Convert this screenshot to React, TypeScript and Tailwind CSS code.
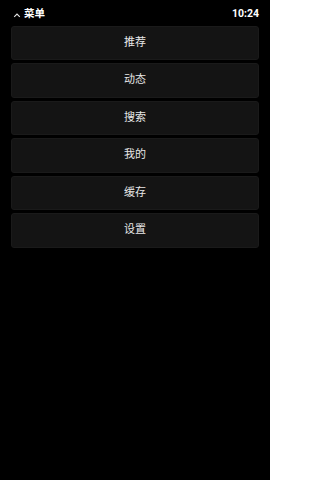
const items = ["推荐", "动态", "搜索", "我的", "缓存", "设置"];

export default function App() {
  return (
    <div
      className="w-[270px] h-[480px] bg-black text-white overflow-hidden"
      style={{ fontFamily: 'Roboto, "Noto Sans CJK SC", sans-serif' }}
    >
      <div className="flex items-center justify-between h-[24px] pl-[13px] pr-[11px] pt-[5px]">
        <div className="flex items-center gap-[3px]">
          <svg width="8" height="6" viewBox="0 0 8 6" fill="none">
            <path d="M1.2 4.8 L4 2 L6.8 4.8" stroke="#e5e5e5" strokeWidth="1.1" />
          </svg>
          <span className="text-[10.5px] font-bold leading-none">菜单</span>
        </div>
        <span className="text-[10.5px] font-bold leading-none">10:24</span>
      </div>
      <div className="flex flex-col gap-[3px] px-[11px] pt-[1.5px]">
        {items.map(label => (
          <button
            key={label}
            className="h-[34.5px] rounded-[3px] bg-[#141414] border border-[#1a1a1a] text-[11px] text-[#e8e8e8] flex items-center justify-center"
          >
            {label}
          </button>
        ))}
      </div>
    </div>
  );
}
